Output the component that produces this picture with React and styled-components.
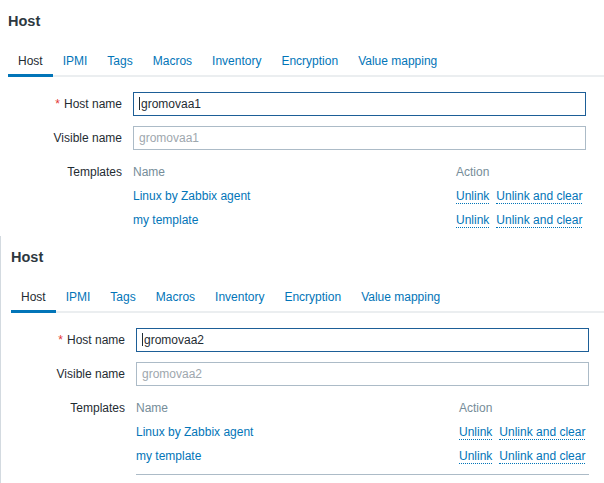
import React from "react";
import styled, { createGlobalStyle } from "styled-components";

const GlobalStyle = createGlobalStyle`
  html, body {
    margin: 0;
    padding: 0;
    background: #ffffff;
    overflow: hidden;
  }
  body {
    font-family: "Liberation Sans", Arial, sans-serif;
    font-size: 12px;
    color: #1f2c33;
  }
`

const Page = styled.div`
    width: 604px;
    height: 483px;
    overflow: hidden;
`

const Panel = styled.section`
    box-sizing: border-box;
    height: ${p => p.$height}px;
    overflow: hidden;
    padding-left: ${p => p.$shifted ? 10 : 8}px;
    border-left: ${p => p.$shifted ? "1px solid #d3dae0" : "none"};
`

const Title = styled.h1`
    margin: 0;
    padding-top: 11px;
    font-size: 14.5px;
    line-height: 20px;
    font-weight: 700;
    color: #2d3840;
`

const Tabs = styled.ul`
    display: flex;
    margin: 16px 0 0;
    padding: 0;
    list-style: none;
    border-bottom: 2px solid #ebeef0;
`

const Tab = styled.li`
    padding: 7px 10px 6px;
    line-height: 14px;
    margin-bottom: -2px;
    border-bottom: 3px solid ${p => p.$active ? "#0275b8" : "transparent"};
    color: ${p => p.$active ? "#1f2c33" : "#0275b8"};
    white-space: nowrap;
`

const Form = styled.div`
    display: grid;
    grid-template-columns: 114px 453px;
    column-gap: 11px;
    row-gap: 10px;
    margin-top: 15px;
`

const Label = styled.div`
    grid-column: 1;
    align-self: start;
    text-align: right;
    line-height: 24px;
    white-space: nowrap;
    color: #1f2c33;
`

const Required = styled.span`
    color: #e33734;
    margin-right: 4px;
`

const TextBox = styled.div`
    grid-column: 2;
    box-sizing: border-box;
    height: 24px;
    padding: 0 5px;
    line-height: 22px;
    border: 1px solid ${p => p.$focused ? "#1d5e97" : "#acbbc7"};
    color: ${p => p.$muted ? "#9ea7ae" : "#1f2c33"};
    background: #fff;
    white-space: nowrap;
`

const Caret = styled.span`
    display: inline-block;
    width: 1px;
    height: 13px;
    margin-right: 1px;
    vertical-align: -2px;
    background: #1f2c33;
`

const TemplatesTable = styled.div`
    grid-column: 2;
    display: grid;
    grid-template-columns: 1fr 130px;
    grid-auto-rows: 24px;
    line-height: 24px;
`

const HeadCell = styled.div`
    color: #768d99;
`

const Cell = styled.div`
    white-space: nowrap;
    color: #0275b8;
`

const Actions = styled.div`
    white-space: nowrap;
`

const ActionLink = styled.span`
    color: #0275b8;
    border-bottom: 1px dotted #0275b8;
    & + & {
        margin-left: 7px;
    }
`

const NextRow = styled.div`
    grid-column: 2;
    margin-top: -4px;
    height: 24px;
    border-top: 1px solid #acbbc7;
`

const tabs = ["Host", "IPMI", "Tags", "Macros", "Inventory", "Encryption", "Value mapping"];
const templates = ["Linux by Zabbix agent", "my template"];

function HostPanel({ name, height, shifted }) {
    return (
        <Panel $height={height} $shifted={shifted}>
            <Title>Host</Title>
            <Tabs>
                {tabs.map((t, i) => <Tab key={t} $active={i === 0}>{t}</Tab>)}
            </Tabs>
            <Form>
                <Label><Required>*</Required>Host name</Label>
                <TextBox $focused><Caret />{name}</TextBox>

                <Label>Visible name</Label>
                <TextBox $muted>{name}</TextBox>

                <Label>Templates</Label>
                <TemplatesTable>
                    <HeadCell>Name</HeadCell>
                    <HeadCell>Action</HeadCell>
                    {templates.map(t => (
                        <React.Fragment key={t}>
                            <Cell>{t}</Cell>
                            <Actions>
                                <ActionLink>Unlink</ActionLink>
                                <ActionLink>Unlink and clear</ActionLink>
                            </Actions>
                        </React.Fragment>
                    ))}
                </TemplatesTable>

                <NextRow />
            </Form>
        </Panel>
    )
}

export default function App() {
    return (
        <Page>
            <GlobalStyle />
            <HostPanel name="gromovaa1" height={236} />
            <HostPanel name="gromovaa2" height={247} shifted />
        </Page>
    )
}
